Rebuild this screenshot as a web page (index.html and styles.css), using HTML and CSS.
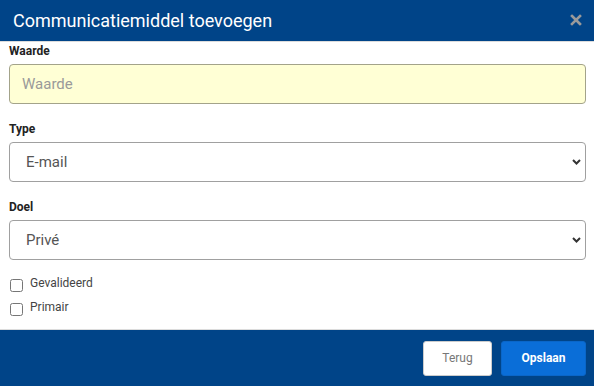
FILE: index.html
```html
<!DOCTYPE html>
<html>
<head>
    <title>Communicatiemiddel toevoegen</title>
    <link rel="stylesheet" href="styles.css">
</head>
<body>
    <div class="modal">
        <div class="modal_header">
            <h1 class="modal_title">Communicatiemiddel toevoegen</h1>
            <button class="close_btn" type="button" aria-label="Sluiten">
                <svg width="12" height="12" viewBox="0 0 12 12">
                    <path d="M2 2 L10 10 M10 2 L2 10" stroke="#9a9a9a" stroke-width="2.6" stroke-linecap="square"/>
                </svg>
            </button>
        </div>

        <form class="modal_body">
            <div class="form_group">
                <label for="waarde">Waarde</label>
                <input type="text" id="waarde" class="field field_input" placeholder="Waarde">
            </div>
            <div class="form_group">
                <label for="type">Type</label>
                <div class="select_wrap">
                    <select id="type" class="field">
                        <option>E-mail</option>
                        <option>Telefoon</option>
                        <option>Mobiel</option>
                    </select>
                    <svg class="chevron" width="9" height="6" viewBox="0 0 9 6">
                        <path d="M1 1 L4.5 4.5 L8 1" stroke="#333" stroke-width="2" fill="none"/>
                    </svg>
                </div>
            </div>
            <div class="form_group">
                <label for="doel">Doel</label>
                <div class="select_wrap">
                    <select id="doel" class="field">
                        <option>Privé</option>
                        <option>Zakelijk</option>
                    </select>
                    <svg class="chevron" width="9" height="6" viewBox="0 0 9 6">
                        <path d="M1 1 L4.5 4.5 L8 1" stroke="#333" stroke-width="2" fill="none"/>
                    </svg>
                </div>
            </div>
            <div class="check_list">
                <label class="check"><input type="checkbox"> <span>Gevalideerd</span></label>
                <label class="check"><input type="checkbox"> <span>Primair</span></label>
            </div>
        </form>

        <div class="modal_footer">
            <button type="button" class="btn btn_back">Terug</button>
            <button type="button" class="btn btn_save">Opslaan</button>
        </div>
    </div>
</body>
</html>
```

FILE: styles.css
```css
body {
    font-family: Roboto, "Liberation Sans", Arial, sans-serif;
    margin: 0;
    padding: 0;
    background-color: #fff;
    color: #333;
}

.modal {
    width: 594px;
    height: 386px;
    display: flex;
    flex-direction: column;
}

.modal_header {
    height: 41px;
    background-color: #004488;
    border-bottom: 1px solid #dcdcdc;
    display: flex;
    align-items: center;
    justify-content: space-between;
    padding: 0 12px 0 13px;
}

.modal_title {
    margin: 0;
    font-size: 18px;
    font-weight: 400;
    color: #fff;
}

.close_btn {
    background: none;
    border: none;
    padding: 0;
    width: 12px;
    height: 12px;
    margin-top: -1px;
    display: flex;
}

.modal_body {
    flex: 1;
    padding: 1px 8px 0 9px;
}

.form_group {
    margin-bottom: 17px;
}

.form_group label {
    display: block;
    font-size: 12px;
    font-weight: 700;
    line-height: 16px;
    margin-bottom: 5px;
    color: #222;
}

.field {
    display: block;
    width: 100%;
    height: 40px;
    box-sizing: border-box;
    border: 1px solid #a0a0a0;
    border-radius: 4px;
    padding: 0 12px;
    font-family: inherit;
    font-size: 15px;
    color: #555;
    background-color: #fff;
    outline: none;
}

.field_input {
    background-color: #ffffd5;
    border-color: #a3a38a;
}

.field_input::placeholder {
    color: #9a9a9a;
}

.select_wrap {
    position: relative;
}

.select_wrap select {
    appearance: none;
    -webkit-appearance: none;
    padding-left: 16px;
}

.chevron {
    position: absolute;
    right: 5px;
    top: 17px;
    pointer-events: none;
}

.check_list {
    margin-top: -1px;
}

.check {
    display: flex;
    align-items: flex-start;
    font-size: 12px;
    color: #444;
    height: 24px;
}

.check input {
    margin: 3px 7px 0 1px;
    width: 13px;
    height: 13px;
}

.modal_footer {
    height: 56px;
    background-color: #004488;
    border-top: 1px solid #dcdcdc;
    display: flex;
    align-items: center;
    justify-content: flex-end;
    gap: 9px;
    padding: 0 8px 0 0;
}

.btn {
    height: 35px;
    border-radius: 3px;
    font-family: inherit;
    font-size: 12px;
    cursor: pointer;
}

.btn_back {
    width: 69px;
    background-color: #fff;
    border: 1px solid #ccc;
    color: #777;
}

.btn_save {
    width: 85px;
    background-color: #0a6ed8;
    border: 1px solid #0a66c8;
    color: #fff;
    font-weight: 700;
}
```
